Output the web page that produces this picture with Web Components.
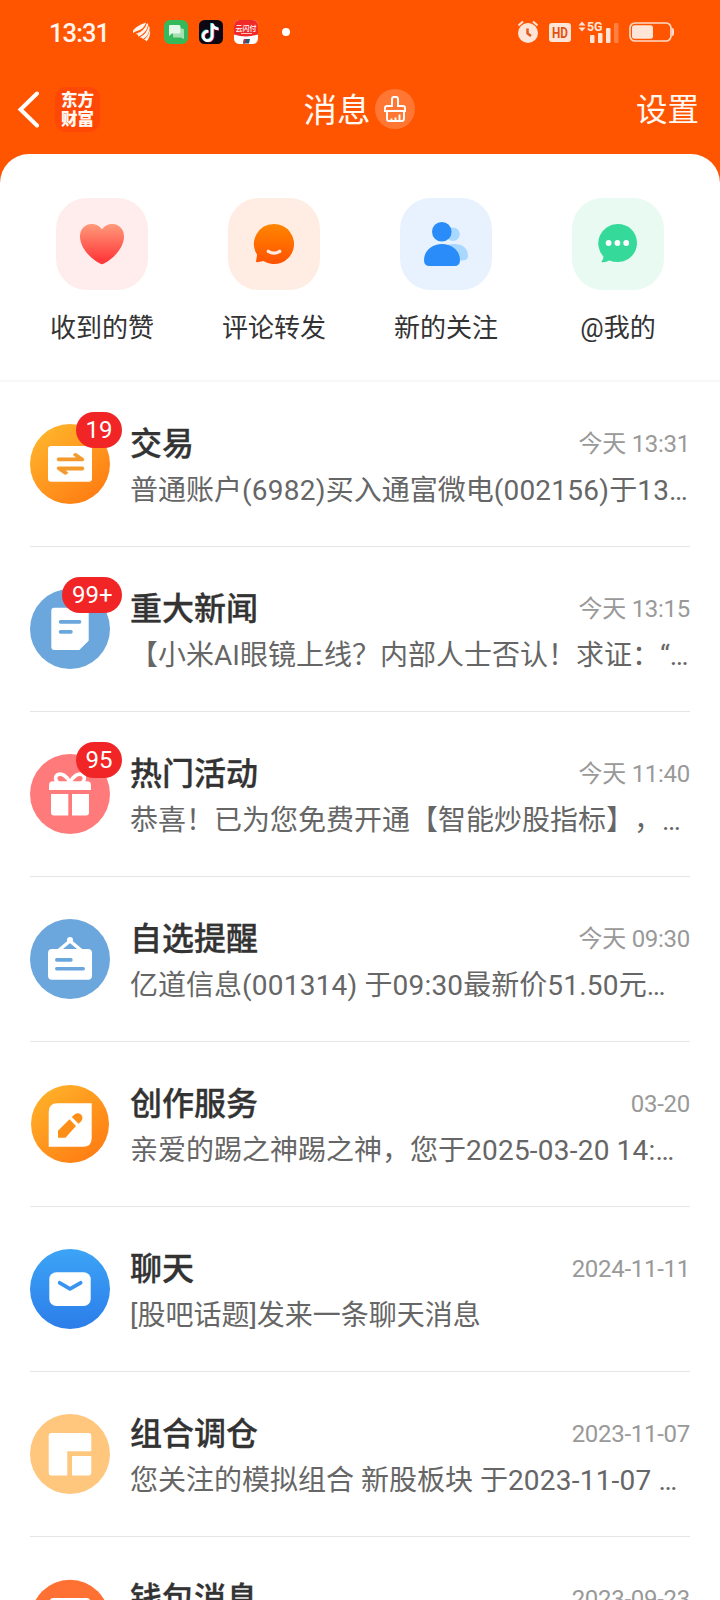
<!DOCTYPE html>
<html lang="zh-CN">
<head>
<meta charset="utf-8">
<title>消息</title>
<style>
html,body{margin:0;padding:0}
body{width:720px;height:1600px;overflow:hidden;background:#ff5500;font-family:Roboto,"Noto Sans CJK SC",sans-serif;text-spacing-trim:space-all}
</style>
</head>
<body>
<message-app></message-app>
<script>
const define = (name, html, setup) => {
  const tpl = document.createElement('template');
  tpl.innerHTML = html;
  customElements.define(name, class extends HTMLElement {
    constructor() {
      super();
      this.attachShadow({mode: 'open'}).appendChild(tpl.content.cloneNode(true));
    }
    connectedCallback() { if (setup) setup(this, this.shadowRoot); }
  });
};

const grad = (id, a, b, x2, y2) => `<defs><linearGradient id="${id}" x1="0" y1="0" x2="${x2}" y2="${y2}"><stop offset="0" stop-color="${a}"/><stop offset="1" stop-color="${b}"/></linearGradient></defs>`;
const disc = (fill, r = 40) => `<circle cx="40" cy="40" r="${r}" fill="${fill}"/>`;

const ROW_ICONS = {
  trade: grad('g', '#ffbb2e', '#ff7b12', .8, 1) + disc('url(#g)') +
    `<rect x="18" y="22" width="44" height="35.7" rx="3" fill="#fff"/>
     <path fill="#f39a2c" stroke="#f39a2c" stroke-width=".5" d="M28.5 33.7H46.6L43.2 31Q44 28.6 46.5 29.6L53.7 34.4Q54.5 37 52.5 37H28.5Q27 37 27 35.3T28.5 33.7ZM52.5 46.2H34.8L38 48.6Q37 51 34.500 50.200L27.3 45.300Q26.3 42.8 28.5 42.8H52.5Q54 42.8 54 44.5T52.5 46.2Z"/>`,
  news: disc('#6ba6dc') +
    `<path fill="#fff" d="M24.3 18.7H55.7Q58.7 18.7 58.7 21.7V51.7L49.3 61H24.3Q21.3 61 21.3 58V21.7Q21.3 18.7 24.3 18.7Z"/>
     <path d="M30.6 32.8H49.5M30.6 42.8H40.9" stroke="#6ba6dc" stroke-width="3.7" stroke-linecap="round"/>`,
  gift: disc('#ff7b7b') +
    `<path fill="#fff" d="M23 27.3H57Q61 27.3 61 31.3V36H19V31.3Q19 27.3 23 27.3ZM21 40H38.3V61.4H24Q21 61.4 21 58.4ZM42 40H59V58.4Q59 61.4 56 61.4H42Z"/>
     <path d="M40 28.5C37 22 31.5 18.5 27.5 20.8C24.5 23 25.3 27 28.5 29M40 28.5C43 22 48.5 18.5 52.5 20.8C55.5 23 54.7 27 51.5 29" fill="none" stroke="#fff" stroke-width="3.6"/>`,
  notice: disc('#6ba6dc') +
    `<rect x="18" y="30" width="44" height="30.7" rx="4" fill="#fff"/><circle cx="40" cy="21" r="3" fill="#fff"/>
     <path d="M28 32L40 22L52 32" fill="none" stroke="#fff" stroke-width="3.4"/>
     <path d="M26.8 40.9H40.9M26.8 49.7H53.2" stroke="#6ba6dc" stroke-width="3.6" stroke-linecap="round"/>`,
  create: grad('g', '#ffb72c', '#ff7b12', .8, 1) + disc('url(#g)', 39) +
    `<path fill="#fff" d="M27.5 19.3H61.7V53.9Q61.7 62.7 53 62.7H18.7V28Q18.7 19.3 27.5 19.3Z"/>
     <path fill="#fd8f19" d="M28 46.7L39.5 35.2L46 42L35.5 53.7H28ZM41.8 33L44.2 30.8A4.6 4.6 0 0 1 51.2 37.3L48.6 39.8Z"/>`,
  chat: grad('g', '#3ca4f6', '#2c7de9', 0, 1) + disc('url(#g)') +
    `<rect x="19.3" y="23.2" width="41.4" height="33.8" rx="7" fill="#fff"/>
     <path d="M29.7 33.8L40 39.8L50.6 33.8" fill="none" stroke="#3a93ee" stroke-width="3.8" stroke-linecap="round" stroke-linejoin="round"/>`,
  combo: disc('#ffc67e') +
    `<path fill="#fff" d="M21.7 18.9H58.3Q61.3 18.9 61.3 21.9V37.2H37.3V61.4H21.7Q18.7 61.4 18.7 58.4V21.9Q18.7 18.9 21.7 18.9ZM42 42H61.3V58.4Q61.3 61.4 58.3 61.4H42Z"/>`,
  wallet: disc('#ff7033', 39.3) + `<rect x="19.5" y="19" width="41" height="42" rx="4" fill="#fff"/>`
};

const TILE_ICONS = {
  like: ['#ffeded', grad('g', '#ff9a7a', '#ff3a3a', 0, .9) +
    `<path fill="url(#g)" d="M46 31.5C48.6 27.5 52.4 26 56.5 26C63.5 26 68 31.6 68 38.4C68 49.5 57.5 60.5 48 65.6Q46 66.7 44 65.6C34.5 60.5 24 49.5 24 38.4C24 31.6 28.5 26 35.5 26C39.6 26 43.4 27.5 46 31.5Z"/>`],
  comment: ['#ffede3', grad('g', '#ff8600', '#ff5200', 0, 1) +
    `<path fill="url(#g)" d="M46 26A20 20 0 1 1 35.5 63L29.5 64.2Q27.8 64.4 28.1 62.7L29.1 56.7A20 20 0 0 1 46 26Z"/>
     <path d="M40.3 53.3Q46 57 51.7 53.3" fill="none" stroke="#ffede3" stroke-width="3.2" stroke-linecap="round"/>`],
  follow: ['#e7f2fe', `<g fill="#a8d8ff"><circle cx="53" cy="36.3" r="6.8"/><path d="M48 46.5Q68 43.5 68 59Q67 62.7 61 62.5H50Z"/></g>
     <g fill="#2a8cf8"><circle cx="41.8" cy="33.8" r="9.8"/><path d="M42 46C52.5 46 60 53 60 62Q60 68 54.5 68H29.5Q24 68 24 62C24 53 31.5 46 42 46Z"/></g>`],
  at: ['#e8faf2', `<path fill="#35d99a" d="M45.5 26C57 26 65 34 65 45C65 56 56 64 46 64Q41.5 64 37.3 62.4Q34 64.4 30 64.2Q29 64 29.8 63.2Q31.7 61.3 31.3 58.3A19.3 19.3 0 0 1 45.5 26Z"/>
     <g fill="#fff"><circle cx="36.6" cy="45" r="2.9"/><circle cx="45.4" cy="45" r="2.9"/><circle cx="54.2" cy="45" r="2.9"/></g>`]
};

define('status-bar', `<style>
:host{display:flex;justify-content:space-between;align-items:center;height:64px;padding:0 46px 0 49px;box-sizing:border-box;color:#fff3ed}
.side{display:flex;align-items:center}
.time{width:84px;font-size:25.5px;font-weight:500;line-height:30px;letter-spacing:-.9px;white-space:nowrap;padding-top:2px}
svg{display:block;flex:none;overflow:visible}
.apps{display:flex;gap:11px;margin-left:14px}
.dot{width:8px;height:8px;border-radius:50%;background:#fff;margin-left:24px}
</style>
<div class="side"><span class="time">13:31</span>
<svg width="17" height="20" viewBox="0 0 17 20" fill="#fff3ed"><path d="M0 8.5Q3 4 13 .5Q11.500 7 4 9Q1.500 10 0 11ZM2.500 12Q11.500 9.500 14 1L15.300 2.500Q13.500 11.500 5 14.800Q6 12 2.500 12ZM6.500 15.500Q14 12 15.800 3.500L16.700 6Q16 13.500 10 17.200Q9.500 15 6.500 15.500ZM11 17.800Q16 13.500 17 7.500Q18 14.500 13.500 19.500Q13 18 11 17.800Z"/></svg>
<div class="apps">
<svg width="24" height="24" viewBox="0 0 24 24"><rect width="24" height="24" rx="6" fill="#36b95a"/><path fill="#a5dfb3" d="M9 8.5H18.5Q20 8.5 20 10V19L16.5 17.5H10Q9 17.5 9 16Z"/><path fill="#e4f7e8" d="M6 5H15Q16.5 5 16.5 6.5V12Q16.5 13.5 15 13.5H8L5 16V6Q5 5 6 5Z"/></svg>
<svg width="24" height="24" viewBox="0 0 24 24"><rect width="24" height="24" rx="5.5" fill="#0b0713"/><g fill="none" stroke-width="2.7"><path stroke="#ff2b59" d="M14 4V15.5A4.6 4.6 0 1 1 10 11.8M14 4.5Q15 9.2 20 9.4"/><path stroke="#25e5e5" d="M12.5 3V14.800A4.6 4.6 0 1 1 8.5 11M12.5 4Q14 8 18.5 8.2"/><path stroke="#fff" d="M13.3 3.5V15.2A4.6 4.6 0 1 1 9.3 11.5M13.3 4Q14.5 8.7 19.5 8.9"/></g></svg>
<svg width="24" height="24" viewBox="0 0 24 24"><defs><clipPath id="c"><rect width="24" height="24" rx="5.5"/></clipPath></defs><g clip-path="url(#c)"><rect width="24" height="24" fill="#fff"/><path d="M0 0H24V14.5Q12 18.5 0 14.5Z" fill="#f02a28"/><path d="M7 13.5H18" stroke="#ffc4bd"/><path d="M10 19H16L15 23.5H9Z" fill="#1f5c75"/><path d="M10 19H12L11 23.5H9Z" fill="#c52b42"/></g><text x="12" y="10.8" text-anchor="middle" font-family="Noto Sans CJK SC" font-size="7" font-weight="500" fill="#fff">云闪付</text></svg>
</div><span class="dot"></span></div>
<div class="side">
<svg width="21" height="24" viewBox="0 0 21 24"><circle cx="10" cy="13" r="10" fill="#ffe4d8"/><path d="M.5 5.5L5 1.5M19.5 5.5L15 1.5" stroke="#ffe4d8" stroke-width="2"/><path d="M9.5 8.5V13.3L13 16" fill="none" stroke="#e25a1c" stroke-width="2.5"/></svg>
<svg width="22" height="20" viewBox="0 0 22 20" style="margin-left:10px"><rect y="1" width="22" height="19" rx="3" fill="#ffe4d8"/><text x="3" y="16" textLength="16" lengthAdjust="spacingAndGlyphs" font-family="Roboto" font-size="15.5" font-weight="700" fill="#e0530f">HD</text></svg>
<svg width="41" height="24" viewBox="0 0 41 24" style="margin-left:7px"><g fill="#ffe4d8"><path d="M.5 5.500L4 1.500L7.500 5.500ZM.5 7.500L4 11.500L7.500 7.500Z"/><text x="9" y="11" textLength="15.5" lengthAdjust="spacingAndGlyphs" font-family="Roboto" font-size="13.5" font-weight="700">5G</text><rect x="12" y="15" width="4.5" height="8" rx="1"/><rect x="20" y="13" width="4.5" height="10" rx="1"/><rect x="28" y="8" width="4.5" height="15" rx="1"/><rect x="36" y="3" width="4.5" height="20" rx="1" opacity=".3"/></g></svg>
<svg width="45" height="20" viewBox="0 0 45 20" style="margin-left:10px"><rect x="1" y="1" width="41" height="18" rx="5" fill="none" stroke="#ffdac9" stroke-width="1.7"/><rect x="3" y="3.2" width="21" height="13.6" rx="2.5" fill="#ffe4d8"/><path d="M43 6Q45 6 45 8V12Q45 14 43 14Z" fill="#ffdac9"/></svg>
</div>`);

define('nav-bar', `<style>
:host{display:grid;grid-template-columns:1fr auto 1fr;align-items:center;height:90px;padding:0 21px 0 17px;box-sizing:border-box;color:#fff8f3}
.left{display:flex;align-items:center;gap:15px}
.logo{width:45px;height:45px;border-radius:11px;background:#ff4706;display:flex;flex-direction:column;align-items:center;justify-content:center;font:900 16.5px/19px "Noto Sans CJK SC",sans-serif}
.logo span{display:block;height:19px}
.title{display:flex;align-items:center;gap:4px;font-size:33.500px;line-height:40px;margin-left:2px}
.title .name{padding-top:4px}
.brush{width:40px;height:40px;border-radius:50%;background:#ff7733;display:flex;align-items:center;justify-content:center}
.set{text-align:right;font-size:31.5px;line-height:40px;padding-top:4px}
svg{display:block}
</style>
<div class="left"><svg width="23" height="38" viewBox="0 0 23 38"><path d="M20 3.5L3.5 19.5L20 35.5" fill="none" stroke="#fff" stroke-width="4" stroke-linecap="round"/></svg><div class="logo"><span>东方</span><span>财富</span></div></div>
<div class="title"><span class="name">消息</span><span class="brush"><svg width="22" height="26" viewBox="0 0 22 26" fill="none" stroke="#fff" stroke-width="1.9"><path d="M8 10V3Q8 1 10 1H12Q14 1 14 3V10H19Q21 10 21 12V15H1V12Q1 10 3 10ZM3 15V23Q3 25 5 25H18Q20 25 20 22V15M7.5 25V22.5M11.5 25V21.5M15.5 25V18.5"/></svg></span></div>
<div class="set">设置</div>`);

define('action-tile', `<style>
:host{display:flex;flex-direction:column;align-items:center;gap:20px}
.tile{width:92px;height:92px;border-radius:31px}
svg{display:block}
.label{font-size:26px;line-height:36px;color:#333;white-space:nowrap}
</style><div class="tile"><svg width="92" height="92" viewBox="0 0 92 92"></svg></div><span class="label"><slot></slot></span>`,
(el, root) => {
  const [bg, art] = TILE_ICONS[el.getAttribute('icon')];
  root.querySelector('.tile').style.background = bg;
  root.querySelector('svg').innerHTML = art;
});

define('message-row', `<style>
:host{display:flex;align-items:center;height:165px;box-sizing:border-box;border-bottom:1px solid #e6e6e6;gap:20px}
.avatar{position:relative;flex:none;width:80px;height:80px}
svg{display:block}
.badge{position:absolute;right:-12px;top:-12px;height:36px;padding:0 9.5px;border-radius:18px;background:#f12525;color:#fff;font-size:24px;line-height:36px}
.badge[hidden]{display:none}
.text{flex:1;min-width:0}
.head{display:flex;justify-content:space-between;align-items:center;height:46px}
.title{font-size:32px;font-weight:500;color:#333;-webkit-text-stroke:.3px #333}
.time{font-size:24px;color:#999;letter-spacing:-.28px}
.time::before{content:"\\200b";font-family:"Noto Sans CJK SC"}
.preview{font-size:28px;line-height:38px;height:38px;padding-top:8px;color:#666;white-space:nowrap}
::slotted(span){letter-spacing:.22px}
</style>
<div class="avatar"><svg width="80" height="80" viewBox="0 0 80 80"></svg><span class="badge" hidden></span></div>
<div class="text"><div class="head"><span class="title"></span><span class="time"></span></div><div class="preview"><slot></slot></div></div>`,
(el, root) => {
  root.querySelector('svg').innerHTML = ROW_ICONS[el.getAttribute('icon')];
  root.querySelector('.title').textContent = el.getAttribute('heading');
  root.querySelector('.time').textContent = el.getAttribute('time');
  // digit runs get slightly looser tracking than the Chinese text round them
  el.innerHTML = el.textContent.replace(/[0-9()\-:.]+/g, '<span>$&</span>');
  const n = el.getAttribute('count');
  if (n) { const b = root.querySelector('.badge'); b.textContent = n; b.hidden = false; }
});

define('message-app', `<style>
:host{display:flex;flex-direction:column;width:720px;height:1600px;overflow:hidden;background:#ff5500}
.sheet{flex:1;min-height:0;background:#fff;border-radius:29px 29px 0 0;overflow:hidden}
.tiles{display:grid;grid-template-columns:repeat(4,172px);justify-content:center;padding-top:44px;height:228px;box-sizing:border-box;border-bottom:2px solid #f7f7f7}
.list{padding:0 30px}
</style>
<status-bar></status-bar><nav-bar></nav-bar>
<div class="sheet">
<div class="tiles"><action-tile icon="like">收到的赞</action-tile><action-tile icon="comment">评论转发</action-tile><action-tile icon="follow">新的关注</action-tile><action-tile icon="at">@我的</action-tile></div>
<div class="list">
<message-row icon="trade" heading="交易" time="今天 13:31" count="19">普通账户(6982)买入通富微电(002156)于13…</message-row>
<message-row icon="news" heading="重大新闻" time="今天 13:15" count="99+">【小米AI眼镜上线？内部人士否认！求证：“…</message-row>
<message-row icon="gift" heading="热门活动" time="今天 11:40" count="95">恭喜！已为您免费开通【智能炒股指标】，…</message-row>
<message-row icon="notice" heading="自选提醒" time="今天 09:30">亿道信息(001314) 于09:30最新价51.50元…</message-row>
<message-row icon="create" heading="创作服务" time="03-20">亲爱的踢之神踢之神，您于2025-03-20 14:…</message-row>
<message-row icon="chat" heading="聊天" time="2024-11-11">[股吧话题]发来一条聊天消息</message-row>
<message-row icon="combo" heading="组合调仓" time="2023-11-07">您关注的模拟组合 新股板块 于2023-11-07 …</message-row>
<message-row icon="wallet" heading="钱包消息" time="2023-09-23"></message-row>
</div></div>`);
</script>
</body>
</html>
